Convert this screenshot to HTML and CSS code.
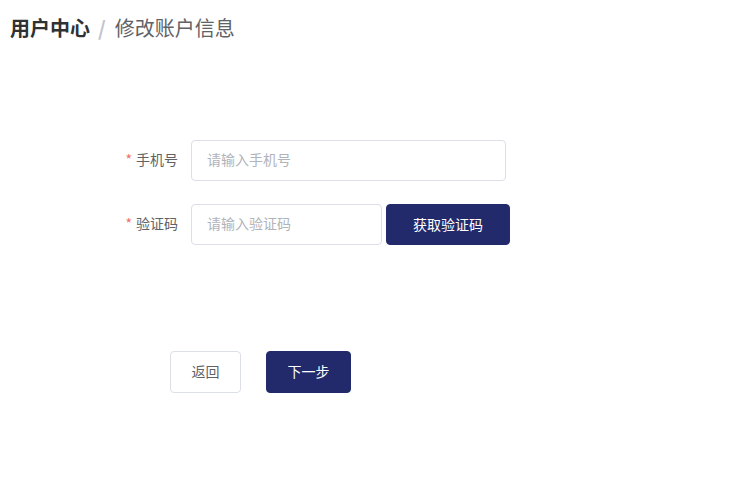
FILE: index.html
```html
<!DOCTYPE html>
<html lang="zh-CN">
<head>
  <meta charset="UTF-8">
  <meta name="viewport" content="width=device-width, initial-scale=1.0">
  <title>修改账户信息</title>
  <link rel="stylesheet" href="styles.css">
</head>
<body>
  <div class="breadcrumb">
    <span class="crumb-main">用户中心</span>
    <span class="crumb-sep">/</span>
    <span class="crumb-current">修改账户信息</span>
  </div>

  <form class="form">
    <div class="form-row">
      <label class="form-label"><span class="required">*</span>手机号</label>
      <input type="text" class="input input-wide" placeholder="请输入手机号">
    </div>
    <div class="form-row">
      <label class="form-label"><span class="required">*</span>验证码</label>
      <input type="text" class="input input-code" placeholder="请输入验证码">
      <button type="button" class="btn btn-primary btn-code">获取验证码</button>
    </div>
  </form>

  <div class="actions">
    <button type="button" class="btn btn-default btn-back">返回</button>
    <button type="button" class="btn btn-primary btn-next">下一步</button>
  </div>
</body>
</html>
```

FILE: styles.css
```css
body {
  margin: 0;
  font-family: "Noto Sans CJK SC", "Noto Sans", sans-serif;
  color: #606266;
  background: #fff;
}
.breadcrumb {
  padding: 16px 10px 0;
  font-size: 20px;
  line-height: 24px;
  display: flex;
  align-items: center;
}
.crumb-main {
  font-weight: bold;
  color: #303133;
}
.crumb-sep {
  color: #c0c4cc;
  margin: 0 9px 0 8px;
  font-weight: bold;
}
.crumb-current {
  color: #606266;
}
.form {
  display: flex;
  flex-direction: column;
  gap: 23px;
  margin-top: 100px;
  padding-left: 110px;
}
.form-row {
  display: flex;
  align-items: center;
}
.form-label {
  width: 68px;
  padding: 0 13px 3px 0;
  text-align: right;
  font-size: 14px;
  color: #606266;
}
.required {
  color: #f56c6c;
  margin-right: 4px;
}
.input {
  box-sizing: border-box;
  height: 41px;
  border: 1px solid #dcdfe6;
  border-radius: 4px;
  padding: 0 15px 3px;
  font-family: inherit;
  font-size: 14px;
  color: #606266;
  outline: none;
}
.input::placeholder {
  color: #b0b3b9;
}
.input-wide {
  width: 315px;
}
.input-code {
  width: 191px;
}
.btn {
  box-sizing: border-box;
  border-radius: 4px;
  font-family: inherit;
  font-size: 14px;
  padding: 0 0 2px;
  cursor: pointer;
}
.btn-primary {
  background-color: #232a6b;
  border: 1px solid #232a6b;
  color: #fff;
}
.btn-default {
  background-color: #fff;
  border: 1px solid #dcdfe6;
  color: #606266;
}
.btn-code {
  width: 124px;
  height: 41px;
  margin-left: 4px;
}
.actions {
  display: flex;
  gap: 25px;
  padding-left: 170px;
  margin-top: 106px;
}
.btn-back {
  width: 71px;
  height: 42px;
}
.btn-next {
  width: 85px;
  height: 42px;
}
```
